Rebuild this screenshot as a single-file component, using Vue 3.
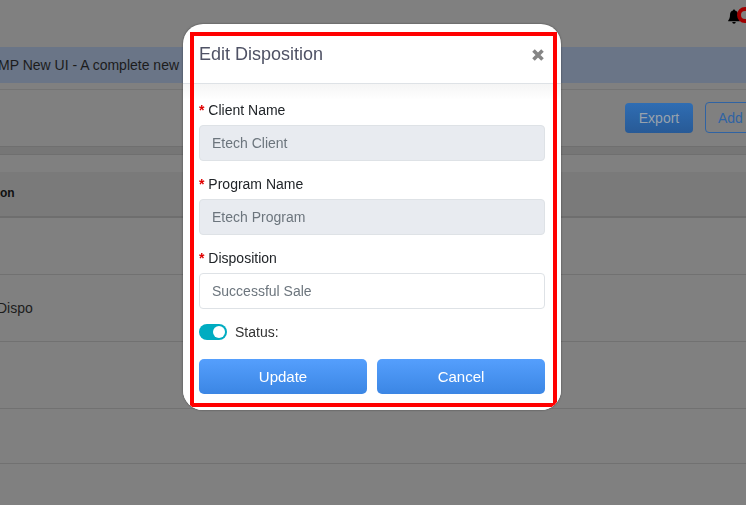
<script setup>
const rows = [
  { h: 56, text: '' },
  { h: 66, text: 'Dispo' },
  { h: 66, text: '' },
  { h: 54, text: '' }
]
const fields = [
  { label: 'Client Name', value: 'Etech Client', disabled: true },
  { label: 'Program Name', value: 'Etech Program', disabled: true },
  { label: 'Disposition', value: 'Successful Sale', disabled: false }
]
</script>

<template>
  <div class="page">
    <header class="topbar">
      <svg class="bell" viewBox="0 0 12 15" width="12" height="15">
        <path d="M6 0.5c.7 0 1 .5 1 1.100 2 .5 3 2.100 3 4.200 0 3 .7 4.400 1.800 5.600v.8H.2v-.8C1.300 10.200 2 8.800 2 5.800c0-2.100 1-3.700 3-4.200 0-.6.300-1.100 1-1.100z" fill="#000"/>
        <path d="M4.300 13h3.400c0 1-.7 1.700-1.700 1.700S4.300 14 4.300 13z" fill="#000"/>
      </svg>
      <span class="badge"></span>
    </header>
    <div class="banner">MP New UI - A complete new</div>
    <div class="toolbar">
      <button class="btn-export">Export</button>
      <button class="btn-add">Add</button>
    </div>
    <div class="strip"></div>
    <div class="th">on</div>
    <div v-for="(r, i) in rows" :key="i" class="row" :style="{ height: r.h + 'px' }">{{ r.text }}</div>
  </div>

  <div class="overlay">
    <div class="modal">
      <div class="modal-head">
        <h2 class="title">Edit Disposition</h2>
        <svg class="close" viewBox="0 0 14 14" width="14" height="14">
          <path d="M2.500 2.500l9 9M11.500 2.500l-9 9" stroke="#858585" stroke-width="3.600" fill="none"/>
        </svg>
      </div>
      <div class="modal-body">
        <div v-for="f in fields" :key="f.label" class="field">
          <label class="label"><span class="req">*</span> {{ f.label }}</label>
          <input class="input" :value="f.value" :disabled="f.disabled" />
        </div>
        <div class="status">
          <span class="toggle"><span class="knob"></span></span>
          <span>Status:</span>
        </div>
        <div class="actions">
          <button class="primary">Update</button>
          <button class="primary">Cancel</button>
        </div>
      </div>
      <div class="red-frame"></div>
    </div>
  </div>
</template>

<style>
html, body { margin: 0; background: #808080; overflow: hidden; }
</style>

<style scoped>
.page {
  width: 746px;
  height: 505px;
  overflow: hidden;
  background: #808080;
  font-family: "Liberation Sans", Arial, sans-serif;
  font-size: 14px;
  color: #1c1c1c;
}
.topbar { height: 47px; position: relative; overflow: hidden; }
.bell { position: absolute; left: 728px; top: 9px; }
.badge {
  position: absolute;
  left: 737px;
  top: 7px;
  width: 16px;
  height: 16px;
  box-sizing: border-box;
  border-radius: 50%;
  border: 4px solid #a00000;
}
.banner {
  height: 36px;
  line-height: 36px;
  background: #6a7587;
  white-space: nowrap;
  font-size: 14px;
  color: #1c1c1c;
  text-indent: -2px;
}
.toolbar {
  margin-top: 6px;
  height: 57px;
  box-sizing: border-box;
  border-top: 1px solid #747474;
  display: flex;
  align-items: flex-start;
  gap: 12px;
  padding: 13px 0 0 625px;
}
.btn-export, .btn-add {
  font: 14px "Liberation Sans", Arial, sans-serif;
  border-radius: 4px;
  padding: 0;
  flex: none;
}
.btn-export { width: 68px; height: 30px; background: linear-gradient(#2f6db3, #285a96); color: #98a2ad; border: 0; }
.btn-add { width: 60px; height: 31px; background: #808080; color: #2f63a3; border: 1px solid #2f63a3; margin-top: -1px; text-align: left; padding-left: 12px; }
.strip { height: 7px; background: #767676; border-top: 1px solid #6f6f6f; border-bottom: 1px solid #6f6f6f; margin-bottom: 17px; }
.th {
  height: 44px;
  line-height: 43px;
  background: #7a7a7a;
  border-bottom: 2px solid #6e6e6e;
  font-weight: 700;
  font-size: 12px;
  color: #111;
}
.row {
  border-bottom: 1px solid #717171;
  display: flex;
  align-items: center;
  text-indent: -3px;
}
.overlay {
  position: fixed;
  inset: 0;
  display: flex;
  justify-content: center;
  align-items: flex-start;
  padding: 24px 2px 0 0;
  box-sizing: border-box;
  font-family: "Liberation Sans", Arial, sans-serif;
}
.modal {
  position: relative;
  width: 378px;
  height: 386px;
  background: #fff;
  border-radius: 20px;
  overflow: hidden;
  box-shadow: 0 0 2px rgba(0, 0, 0, .5);
}
.modal-head {
  height: 59px;
  border-bottom: 1px solid #dee2e6;
  display: flex;
  justify-content: space-between;
  padding: 0 16px;
  align-items: flex-start;
}
.title { margin: 19px 0 0; font-size: 18px; line-height: 22px; font-weight: 400; color: #4f5265; }
.close { margin-top: 24px; }
.modal-body {
  padding: 0 16px 16px;
  background: linear-gradient(#f5f5f5, #fff 16px);
}
.field { display: flex; flex-direction: column; padding-top: 18px; }
.field + .field { padding-top: 15px; }
.label { font-size: 14px; line-height: 16px; color: #212529; margin-bottom: 7px; }
.req { color: #e00000; font-weight: 700; }
.input {
  height: 36px;
  box-sizing: border-box;
  border: 1px solid #dee2e6;
  border-radius: 4px;
  padding: 0 12px;
  font: 14px "Liberation Sans", Arial, sans-serif;
  color: #6c757d;
  background: #fff;
  outline: 0;
}
.input:disabled { background: #e8ebf0; color: #6c757d; }
.status { display: flex; align-items: center; gap: 8px; font-size: 14px; line-height: 16px; color: #333; margin-top: 15px; height: 16px; }
.toggle { width: 28px; height: 16px; border-radius: 8px; background: #00acc1; position: relative; flex: none; }
.knob { position: absolute; right: 2px; top: 2px; width: 12px; height: 12px; border-radius: 50%; background: #fff; }
.actions { display: flex; gap: 10px; margin-top: 19px; }
.primary {
  flex: 1;
  height: 35px;
  border: 0;
  border-radius: 5px;
  background: linear-gradient(#559ffd, #3b86e4);
  color: #fff;
  font: 15px "Liberation Sans", Arial, sans-serif;
  padding: 0;
}
.red-frame {
  position: absolute;
  left: 7px;
  top: 8px;
  width: 367px;
  height: 375px;
  box-sizing: border-box;
  border: 4px solid #ff0000;
  pointer-events: none;
}
</style>
